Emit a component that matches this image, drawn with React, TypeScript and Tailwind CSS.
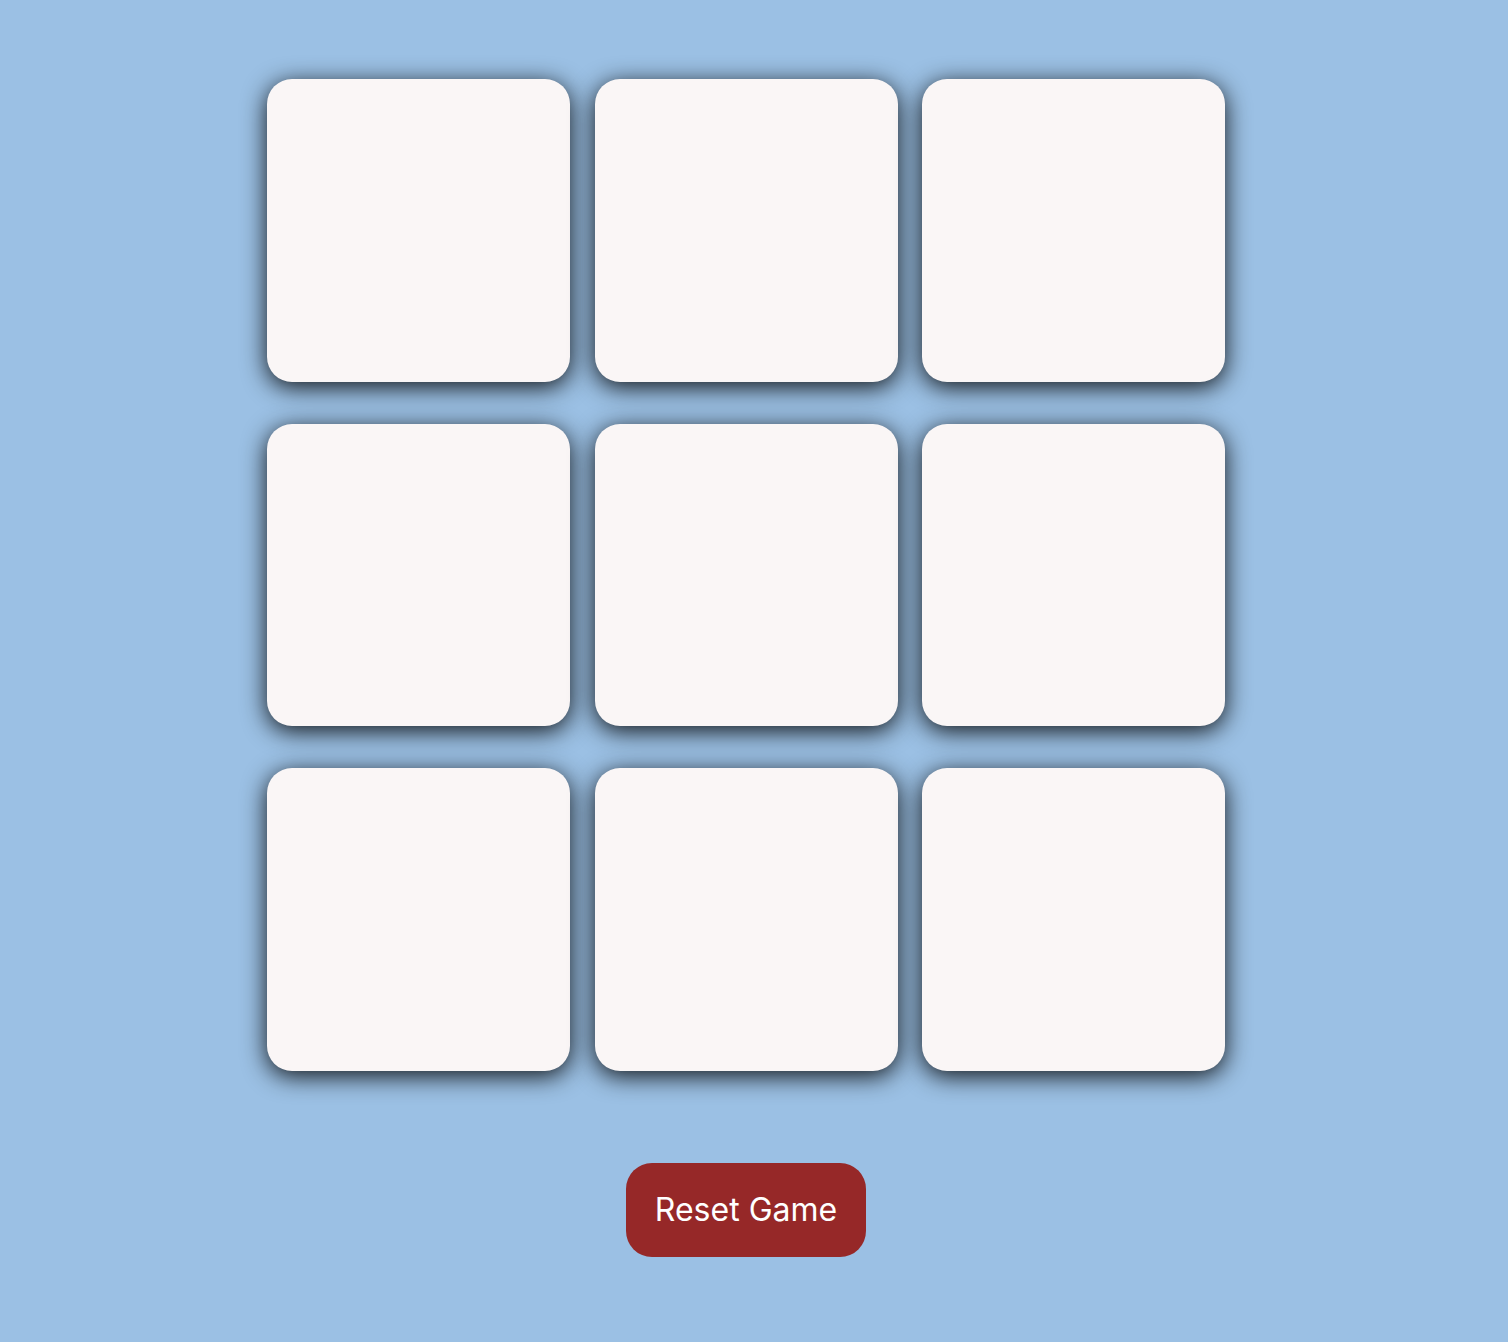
import { useState } from "react";

const App = () => {
  const [cells, setCells] = useState<string[]>(Array(9).fill(""));
  const [turn, setTurn] = useState("X");

  const handleClick = (i: number) => {
    if (cells[i]) return;
    const next = [...cells];
    next[i] = turn;
    setCells(next);
    setTurn(turn === "X" ? "O" : "X");
  };

  const resetGame = () => {
    setCells(Array(9).fill(""));
    setTurn("X");
  };

  return (
    <main className="min-h-[1342px] w-full bg-[#9bc0e4] flex flex-col items-center pt-[79px] pr-4 font-['Inter','Liberation_Sans',sans-serif]">
      {/* Board */}
      <div className="grid grid-cols-[repeat(3,303px)] gap-x-[24.5px] gap-y-[42px]">
        {cells.map((c, i) => (
          <button
            key={i}
            onClick={() => handleClick(i)}
            className="h-[302.5px] w-[303px] rounded-[25px] bg-[#faf6f6] shadow-[0_5px_25px_rgba(0,0,0,0.9)] text-[120px] font-semibold text-gray-700 flex items-center justify-center"
          >
            {c}
          </button>
        ))}
      </div>

      {/* Reset */}
      <button
        onClick={resetGame}
        className="mt-[92px] h-[94px] w-[240px] rounded-[26px] bg-[#962828] text-white text-[32px] leading-none"
      >
        Reset Game
      </button>
    </main>
  );
};

export default App;
